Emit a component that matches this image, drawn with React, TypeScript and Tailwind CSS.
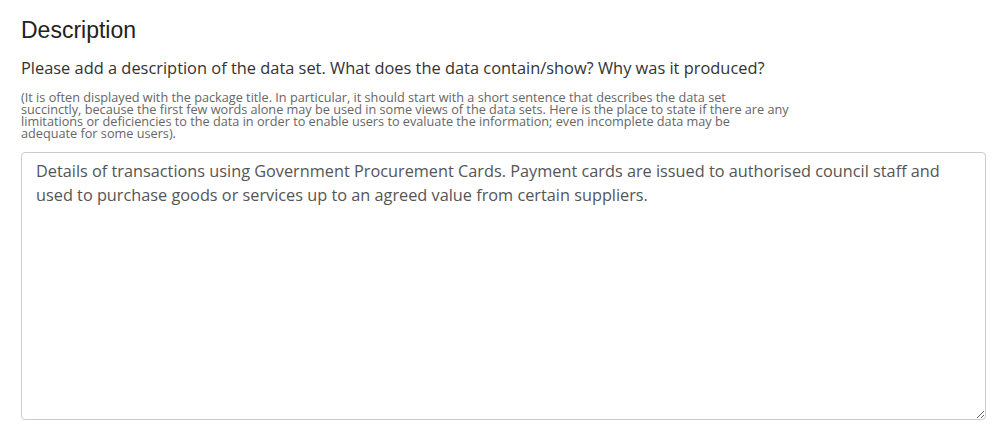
import React from "react";

export default function App() {
  return (
    <div className="w-[1008px] h-[430px] bg-white px-[21px] pt-[14px]">
      <h2 className="text-[23px] leading-[32px] text-[#222] font-['Liberation_Sans',Arial,sans-serif]">
        Description
      </h2>
      <div className="mt-[11px] font-['Open_Sans',sans-serif]">
        <label className="block text-[16.4px] leading-[22px] text-[#333]">
          Please add a description of the data set. What does the data contain/show? Why was it produced?
        </label>
        <p className="mt-[12px] w-[800px] text-[12.7px] leading-[12px] text-[#666]">
          (It is often displayed with the package title. In particular, it should start with a short sentence that describes the data set
          <br />
          succinctly, because the first few words alone may be used in some views of the data sets. Here is the place to state if there are any
          <br />
          limitations or deficiencies to the data in order to enable users to evaluate the information; even incomplete data may be
          <br />
          adequate for some users).
        </p>
        <textarea
          className="mt-[13px] block w-[965px] h-[268px] rounded-[4px] border border-[#ccc] px-[14px] py-[6px] text-[16.3px] leading-[24px] text-[#555] outline-none font-['Open_Sans',sans-serif]"
          defaultValue="Details of transactions using Government Procurement Cards. Payment cards are issued to authorised council staff and used to purchase goods or services up to an agreed value from certain suppliers."
        />
      </div>
    </div>
  );
}
